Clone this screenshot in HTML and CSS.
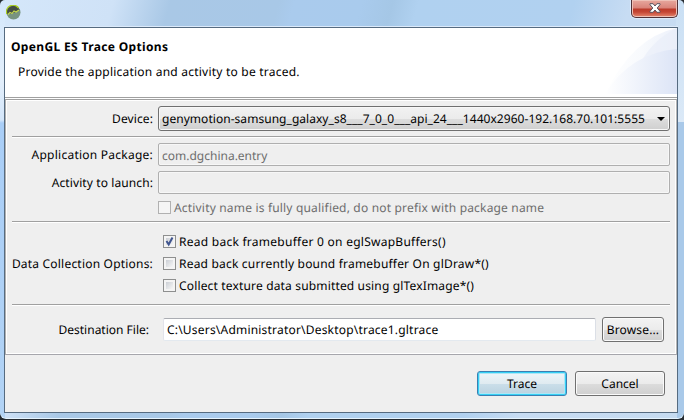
FILE: index.html
```html
<!DOCTYPE html>
<html lang="en">
<head>
<meta charset="utf-8">
<title>OpenGL ES Trace Options</title>
<link rel="stylesheet" href="styles.css">
</head>
<body>
<div class="window">
  <div class="titlebar">
    <svg class="app-icon" width="15" height="15" viewBox="0 0 15 15">
      <circle cx="7.5" cy="7.5" r="7" fill="#789480"/>
      <path d="M1 9A6.6 6.6 0 0 1 13.6 5L10 7 7 8 4 9Z" fill="#444d46"/>
      <path d="M.8 9A6.7 6.7 0 0 1 12.6 3" fill="none" stroke="#a9ce20" stroke-width="1.4"/>
      <path d="M2 9.500l2-2 2 1 2-2.500 2 1 3-2" fill="none" stroke="#c5d84e" stroke-width="1.2"/>
    </svg>
    <div class="close"><svg width="12" height="10" viewBox="0 0 12 10"><path d="M1 .7h3.1L6 3 7.9.7H11v1L8.2 5 11 8.300v1H7.900L6 7 4.100 9.300H1v-1L3.800 5 1 1.700Z" fill="#fff" stroke="#59535f"/></svg></div>
  </div>
  <div class="client">
    <header class="banner">
      <h1>OpenGL ES Trace Options</h1>
      <p>Provide the application and activity to be traced.</p>
      <svg class="swoosh" width="72" height="66" viewBox="0 0 72 66">
        <defs>
          <linearGradient id="outer"><stop offset="0" stop-color="#fff"/><stop offset=".5" stop-color="#f8fafd"/><stop offset="1" stop-color="#edf1fb"/></linearGradient>
          <linearGradient id="inner"><stop offset="0" stop-color="#fff"/><stop offset=".35" stop-color="#f3f6fc"/><stop offset="1" stop-color="#dce4f6"/></linearGradient>
        </defs>
        <path d="M0 66Q28 9 72 0V66Z" fill="url(#outer)"/>
        <path d="M35 36Q47 12 72 0V30Z" fill="#e7ecf9" opacity=".6"/>
        <path d="M0 66Q25 25 72 21V66Z" fill="url(#inner)"/>
      </svg>
    </header>
    <main class="panel">
      <div class="row device"><label class="t-device">Device:</label><div class="combo"><span>genymotion-samsung_galaxy_s8___7_0_0___api_24___1440x2960-192.168.70.101:5555</span><i></i></div></div>
      <hr>
      <div class="row package"><label class="t-package">Application Package:</label><div class="field off">com.dgchina.entry</div></div>
      <div class="row launch"><label class="t-launch">Activity to launch:</label><div class="field off"></div></div>
      <div class="check off-check"><b></b><span class="t-qualified">Activity name is fully qualified, do not prefix with package name</span></div>
      <hr>
      <div class="row options">
        <label class="t-options">Data Collection Options:</label>
        <div class="checks">
          <div class="check"><b><svg width="11" height="11" viewBox="0 0 11 11"><path d="M2.500 5l2.200 3.500L8.500 1.500" fill="none" stroke="#40558f" stroke-width="2"/></svg></b><span class="t-read0">Read back framebuffer 0 on eglSwapBuffers()</span></div>
          <div class="check"><b></b><span class="t-readb">Read back currently bound framebuffer On glDraw*()</span></div>
          <div class="check"><b></b><span class="t-tex">Collect texture data submitted using glTexImage*()</span></div>
        </div>
      </div>
      <hr>
      <div class="row dest"><label>Destination File:</label><div class="field path">C:\Users\Administrator\Desktop\trace1.gltrace</div><div class="button browse"><span>Browse...</span></div></div>
    </main>
    <footer><div class="button primary"><span>Trace</span></div><div class="button"><span>Cancel</span></div></footer>
  </div>
</div>
</body>
</html>
```
FILE: styles.css
```css
* { box-sizing: border-box; }
body { margin: 0; overflow: hidden; background: #252b31; font: 12px/17px "Noto Sans", "Open Sans", sans-serif; color: #000; white-space: nowrap; text-rendering: geometricPrecision; font-variant-ligatures: none; }
.window {
  width: 684px; height: 419px; border-radius: 5px 5px 6px 6px; padding: 0 6px 6px 4px;
  background:
    linear-gradient(#a9c9e9, #a9c9e9) 100% 122px / 7px 300px no-repeat,
    linear-gradient(#d3e7fb 0, #e3effb 80px, #d4e6fa 120px, #a9cef7 123px, #b2d3f5) 0 0 / 5px 100% no-repeat,
    linear-gradient(#c9dff4, #dbe9f7 121px) 100% 0 / 8px 122px no-repeat,
    linear-gradient(105deg, #d5e7fa 0, #cfe2f7 110px, #a9c8e6 165px, #a8c8e7 270px, #aacbed 285px, #a9cbed 350px, #a5c7e6 380px, #b0d1f0 405px, #b1d1f0 555px, #c7dcf3 610px, #c6dbf0);
  box-shadow: inset 0 -1px #e5f4ff;
}
.titlebar { height: 27px; display: flex; justify-content: space-between; border-bottom: 1px solid #dceafa; }
.app-icon { margin: 5px 0 0 2px; }
.close { width: 47px; height: 18px; display: flex; justify-content: center; padding-top: 3px; border: 1px solid #503238; border-top: 0; border-radius: 0 0 5px 5px; background: linear-gradient(#e7a89e, #d98379 8px, #bb3b2b 9px, #c54634 12px, #e58870); box-shadow: inset 0 0 0 1px #eec1b7, 0 0 0 1px #dceafa; }
.client { height: 386px; border: 1px solid #566b80; background: #efefef; }
.banner { position: relative; height: 70px; background: #fff; border-bottom: 1px solid #a0a0a0; padding: 10px 0 0 6px; }
h1 { font-size: 12px; line-height: 17px; margin: 0; font-weight: 700; letter-spacing: .35px; }
p { margin: 8px 0 0 7px; letter-spacing: .22px; }
.swoosh { position: absolute; right: 0; top: 0; }
.panel { height: 256px; margin-top: 1px; padding: 6px 5px 0 6px; border: 1px solid; border-color: #a0a0a0 #b5b5b5 #a6a6ac #b0b0b0; box-shadow: inset 1px 1px #fff, inset -1px -1px #fff, 0 -1px #fff; }
.row { display: grid; grid-template-columns: 141px 512px; column-gap: 5px; align-items: center; }
label { justify-self: end; }
hr { border: 0; height: 2px; margin: 0; width: 658px; background: linear-gradient(#a0a0a0 50%, #fff 50%); }
.combo { height: 25px; border: 1px solid #707070; border-radius: 3px; background: linear-gradient(#f2f2f2, #ebebeb 12px, #ddd 12px, #cfcfcf); box-shadow: inset 0 0 0 1px #f8f8f8; display: flex; align-items: center; justify-content: space-between; padding: 0 4px 0 3px; letter-spacing: .04px; }
.combo i { border: 4px solid transparent; border-top-color: #000; border-bottom: 0; }
.device { margin-bottom: 5px; }
.package { margin: 5px 0; }
.field { height: 23px; border: 1px solid #afafaf; border-radius: 2px; padding: 3px 3px 0; }
.off { color: #6d6d6d; box-shadow: inset 0 0 0 1px #f7f7f7; }
.check { display: flex; align-items: center; height: 22px; gap: 3px; }
.check b { width: 13px; height: 13px; border: 1px solid #8e8f8f; background: linear-gradient(135deg, #cbcfd5, #f6f6f6) 2px 2px / 7px 7px no-repeat, #f4f4f4; display: grid; }
.off-check { margin: 2px 0 3px 146px; color: #6d6d6d; }
.off-check b { border-color: #b1b1b1; background: #f5f5f5; }
.options { height: 81px; padding-bottom: 1px; }
.checks { padding-left: 5px; }
.dest { grid-template-columns: 145px 433px 62px; column-gap: 6px; margin-top: 11px; }
.dest label { padding-right: 8px; }
.path { padding-top: 2px; background: #fff; border-color: #abadb3 #dbdfe6 #e3e9ef #e2e3ea; letter-spacing: .2px; }
.t-package { letter-spacing: .24px; }
.t-device, .t-launch { letter-spacing: .1px; }
.t-options { letter-spacing: .2px; }
.t-qualified { letter-spacing: .18px; }
.t-read0 { letter-spacing: .26px; }
.t-readb { letter-spacing: .2px; }
.t-tex { letter-spacing: .16px; }
.button { height: 25px; border: 1px solid #707070; border-radius: 3px; background: linear-gradient(#f3f3f3, #ebebeb 12px, #dcdcdc 12px, #cfcfcf); box-shadow: inset 0 0 0 1px #fafafa; display: flex; justify-content: center; align-items: center; }
.browse { letter-spacing: .15px; }
footer { display: flex; justify-content: flex-end; gap: 8px; padding: 16px 12px 0 0; }
footer .button { width: 90px; }
.primary { border-color: #3c7fb1; background: linear-gradient(#eff6f9, #dfeaf0 12px, #cadee9 12px, #bad2e0); box-shadow: inset 0 0 0 1px #35d0f5, inset 0 0 0 2px #aee5f5; }
```
